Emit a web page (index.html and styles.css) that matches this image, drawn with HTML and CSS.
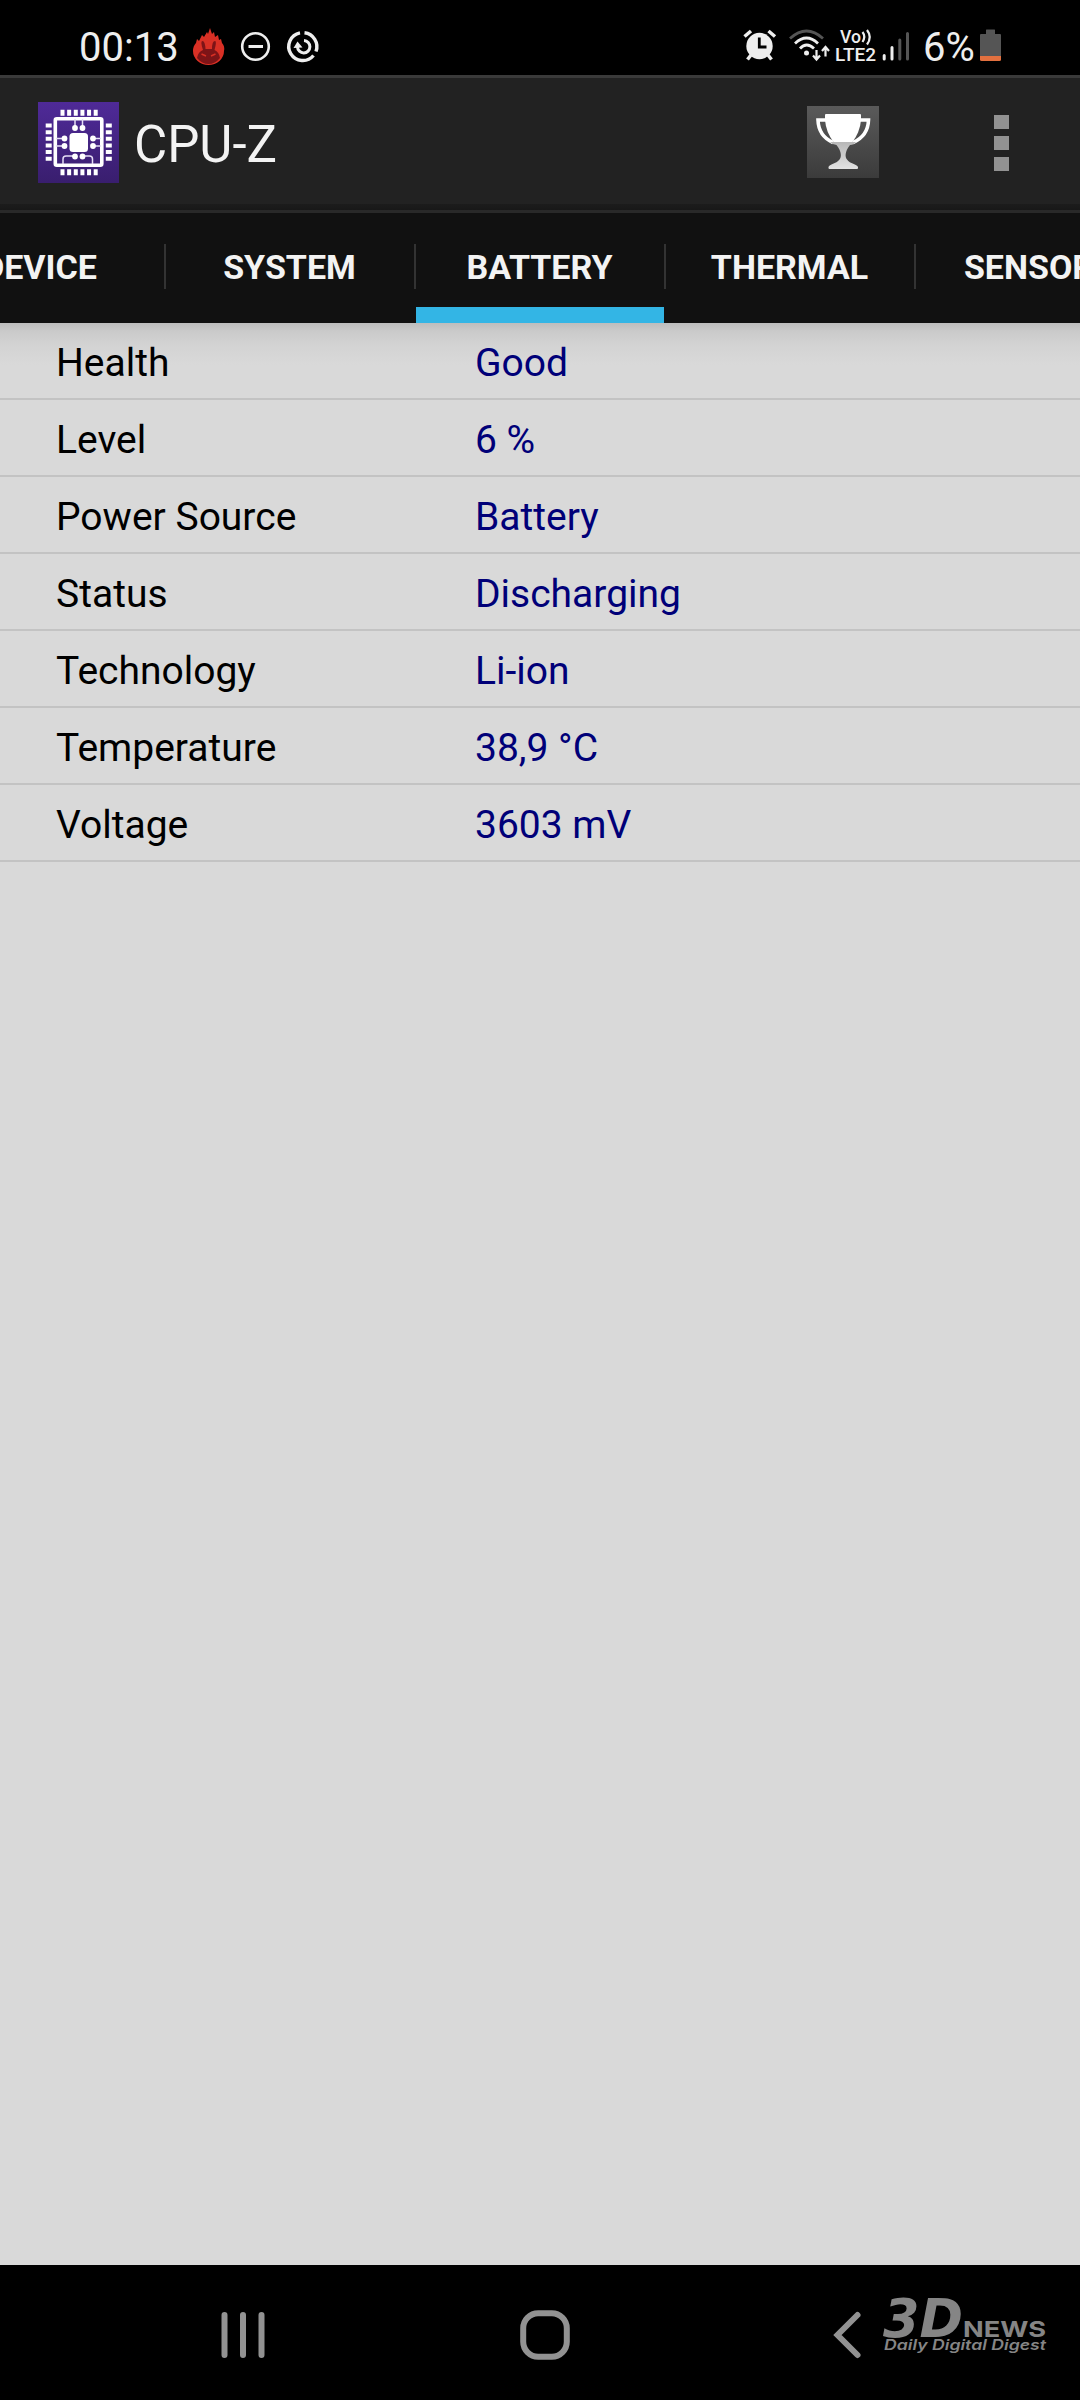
FILE: index.html
```
<!DOCTYPE html>
<html lang="en">
<head>
    <meta charset="UTF-8">
    <meta name="viewport" content="width=device-width, initial-scale=1.0">
    <title>CPU-Z</title>
    <link rel="stylesheet" href="styles.css">
</head>
<body>
    <div class="screen">
        <div class="status-bar">
            <div class="status-left">
                <span class="clock">00:13</span>
                <svg class="icon-antutu" width="32" height="36" viewBox="0 0 32 36">
                    <path fill="#d93025" d="M4 11 L6 13 L9 7 L11 9 L14 4 L15 6 L17 0 L19 6 L21 4 L22 9 L25 7 L26 12 L28 11 L29 15 Q32 18 31 23 A15.500 14 0 0 1 0 23 Q0 18 3 15 Z"/>
                    <path fill="#7d1417" d="M10 22 Q7 13 9.500 13 Q12 13 12.500 21 H19 Q19 13 22 13 Q24 13 21.500 22 Q26 24 27 30 Q22 36 15.500 36 Q9 36 4 30 Q5 24 10 22 Z"/>
                    <path stroke="#d93025" stroke-width="1.500" d="M8.500 26 L13 28 M22.500 26 L18 28"/>
                </svg>
                <svg class="icon-dnd" width="30" height="36" viewBox="0 0 30 36">
                    <circle cx="14.500" cy="18.500" r="13.300" fill="none" stroke="#eee" stroke-width="2.600"/>
                    <path stroke="#eee" stroke-width="3" d="M7.500 18.500 H22"/>
                </svg>
                <svg class="icon-sync" width="32" height="36" viewBox="0 0 32 36">
                    <g fill="none" stroke="#eee">
                        <path stroke-width="3.400" d="M13 4.800 A14 14 0 1 0 26.500 27.500"/>
                        <path stroke-width="3.400" d="M17.500 4.800 A14 14 0 0 1 29 23.500"/>
                        <path stroke-width="3" d="M17 12.500 A6.200 6.200 0 1 1 10.500 19"/>
                    </g>
                    <path fill="#eee" d="M6.500 20 L10.500 13.500 L15.500 19.500 Z"/>
                </svg>
            </div>
            <div class="status-right">
                <svg class="icon-alarm" width="34" height="36" viewBox="0 0 34 36">
                    <circle cx="16.500" cy="18" r="13.200" fill="#eee"/>
                    <path stroke="#eee" stroke-width="3.500" d="M1.500 8.500 L8 3 M25.500 3 L32 8.500 M4.500 31.500 L8 27 M28.500 31.500 L25 27"/>
                    <path fill="none" stroke="#000" stroke-width="2.800" d="M16.300 9.500 V19 H23.500"/>
                </svg>
                <svg class="icon-wifi" width="42" height="36" viewBox="0 0 42 36">
                    <g fill="none" stroke-width="2.800">
                        <path stroke="#555" d="M1 10.500 Q17.500 -4.500 34 10.500"/>
                        <path stroke="#eee" d="M6 15.500 Q17.500 4.500 29 15.500"/>
                        <path stroke="#eee" d="M11 20.500 Q17.500 13.500 25 20.500"/>
                    </g>
                    <circle cx="17.500" cy="25" r="2.500" fill="#eee"/>
                    <path fill="none" stroke="#eee" stroke-width="2.200" d="M27.500 22 V31 M24 27.500 L27.500 31.500 L31 27.500 M36.500 28.500 V20 M33 23 L36.500 19 L40 23"/>
                </svg>
                <svg class="icon-lte" width="41" height="36" viewBox="0 0 41 36">
                    <text class="lte-text" x="5" y="14.500" textLength="21" lengthAdjust="spacingAndGlyphs">Vo</text>
                    <path fill="none" stroke="#eee" stroke-width="2.200" d="M27.500 4 Q31 8.500 27.500 14 M32 2 Q37.500 9 32 16.500"/>
                    <text class="lte-text" x="0" y="32.500" textLength="41" lengthAdjust="spacingAndGlyphs">LTE2</text>
                </svg>
                <svg class="icon-signal" width="28" height="36" viewBox="0 0 28 36">
                    <g stroke-width="3" stroke-linecap="round">
                        <path stroke="#eee" d="M2.200 27.500 V31 M10 19.500 V31"/>
                        <path stroke="#555" d="M17.800 12 V31 M25.500 5.500 V31"/>
                    </g>
                </svg>
                <span class="percent">6%</span>
                <svg class="icon-battery" width="21" height="36" viewBox="0 0 21 36">
                    <path fill="#555" d="M6 2 Q6 1.500 6.500 1.500 H14.500 Q15 1.500 15 2 V6 H20 Q21 6 21 7 V28 H0 V7 Q0 6 1 6 H6 Z"/>
                    <path fill="#e2703f" d="M0 28 H21 V31.500 Q21 33 19.500 33 H1.500 Q0 33 0 31.500 Z"/>
                </svg>
            </div>
        </div>

        <header class="action-bar">
            <svg class="app-icon" width="81" height="81" viewBox="0 0 81 81">
                <defs>
                    <linearGradient id="purple" x1="0" y1="0" x2="0" y2="1">
                        <stop offset="0" stop-color="#4f2a98"/>
                        <stop offset="1" stop-color="#391e6e"/>
                    </linearGradient>
                </defs>
                <rect width="81" height="81" fill="url(#purple)"/>
                <!-- pins of the chip -->
                <g stroke="#fff" stroke-width="6" fill="none" stroke-dasharray="4 2.640">
                    <path d="M22.500 10.700 H60 M22.500 70.300 H60 M10.700 21.500 V58.900 M70.800 21.500 V58.900"/>
                </g>
                <rect x="17.300" y="16.800" width="46.500" height="46.500" rx="1.500" fill="none" stroke="#fff" stroke-width="3.600"/>
                <rect x="31.500" y="31" width="18.500" height="19" rx="3.500" fill="#fff"/>
                <g fill="none" stroke="#e5ddf5" stroke-width="1.500">
                    <path d="M37 17 V26 M44.500 17 V26 M18 36.500 H26 M18 44 H26 M56 36.500 H63 M56 44 H63"/>
                    <path d="M37 54 H28 Q25 54 25 57 V62 M44.500 54 H51.500 Q54.500 54 54.500 57 V62"/>
                </g>
                <g fill="#fff">
                    <circle cx="37" cy="26" r="2.900"/><circle cx="44.500" cy="26" r="2.900"/>
                    <circle cx="37" cy="54.500" r="2.900"/><circle cx="44.500" cy="54.500" r="2.900"/>
                    <circle cx="26.500" cy="36.500" r="2.900"/><circle cx="26.500" cy="44" r="2.900"/>
                    <circle cx="55" cy="36.500" r="2.900"/><circle cx="55" cy="44" r="2.900"/>
                </g>
            </svg>
            <h1 class="title">CPU-Z</h1>
            <svg class="trophy" width="72" height="72" viewBox="0 0 72 72">
                <defs>
                    <linearGradient id="tile" x1="0" y1="0" x2="0" y2="1">
                        <stop offset="0" stop-color="#5a5a5a"/>
                        <stop offset="1" stop-color="#3b3b3b"/>
                    </linearGradient>
                    <linearGradient id="stem" x1="0" y1="0" x2="0" y2="1">
                        <stop offset="0" stop-color="#b8b8b8"/>
                        <stop offset="1" stop-color="#e2e2e2"/>
                    </linearGradient>
                </defs>
                <rect width="72" height="72" fill="url(#tile)"/>
                <path fill="none" stroke="#fff" stroke-width="3.600" d="M20 14 H11 Q11.500 30 26 36.500 M52 14 H61.500 Q61 30 46 36.500"/>
                <path fill="#fff" d="M18 9 Q18 8 19 8 H53 Q54 8 54 9 V14 Q53 26 45.500 36 H26.500 Q19 26 18 14 Z"/>
                <path fill="url(#stem)" d="M23 36 H49 Q47 39 43 39 C37.500 46 38 51 40 53.500 C43 58 50 58 51 61 V62 Q51 63 50 63 H22.500 Q21.500 63 21.500 62 V61 C22.500 58 29 58 32.500 53.500 C34.500 51 35 46 29.500 39 Q26 39 23 36 Z"/>
            </svg>
            <div class="menu">
                <span></span>
                <span></span>
                <span></span>
            </div>
        </header>

        <nav class="tabs">
            <div class="tab">DEVICE</div>
            <div class="tab">SYSTEM</div>
            <div class="tab active">BATTERY</div>
            <div class="tab">THERMAL</div>
            <div class="tab">SENSORS</div>
        </nav>

        <main class="content">
            <div class="row"><span class="label">Health</span><span class="value">Good</span></div>
            <div class="row"><span class="label">Level</span><span class="value">6 %</span></div>
            <div class="row"><span class="label">Power Source</span><span class="value">Battery</span></div>
            <div class="row"><span class="label">Status</span><span class="value">Discharging</span></div>
            <div class="row"><span class="label">Technology</span><span class="value">Li-ion</span></div>
            <div class="row"><span class="label">Temperature</span><span class="value">38,9 °C</span></div>
            <div class="row"><span class="label">Voltage</span><span class="value">3603 mV</span></div>
        </main>

        <footer class="nav-bar">
            <svg class="nav-recent" width="46" height="50" viewBox="0 0 46 50">
                <path stroke="#929292" stroke-width="6" stroke-linecap="round" d="M4.500 5 V45 M23 5 V45 M41.500 5 V45"/>
            </svg>
            <svg class="nav-home" width="50" height="50" viewBox="0 0 50 50">
                <rect x="3.200" y="3.200" width="43.600" height="43.600" rx="15" fill="none" stroke="#929292" stroke-width="6"/>
            </svg>
            <svg class="nav-back" width="28" height="50" viewBox="0 0 28 50">
                <path fill="none" stroke="#929292" stroke-width="6" stroke-linecap="round" d="M24.500 5 L4.500 25 L24.500 45"/>
            </svg>
            <svg class="watermark" width="166" height="60" viewBox="0 0 166 60">
                <text class="wm-big" x="0" y="42" textLength="80" lengthAdjust="spacingAndGlyphs">3D</text>
                <text class="wm-news" x="80" y="42" textLength="83" lengthAdjust="spacingAndGlyphs">NEWS</text>
                <text class="wm-tag" x="1" y="55" textLength="162" lengthAdjust="spacingAndGlyphs">Daily Digital Digest</text>
            </svg>
        </footer>
    </div>
</body>
</html>
```
FILE: styles.css
```
* {
    margin: 0;
    padding: 0;
    box-sizing: border-box;
}

body {
    background-color: #000;
    font-family: Roboto, sans-serif;
}

svg {
    display: block;
    flex-shrink: 0;
    overflow: visible;
}

.screen {
    width: 1080px;
    height: 2400px;
    display: flex;
    flex-direction: column;
    overflow: hidden;
}

/* status bar */
.status-bar {
    height: 75px;
    padding: 28px 79px 0 79px;
    display: flex;
    justify-content: space-between;
    background-color: #000;
    color: #eee;
}

.status-left,
.status-right {
    display: flex;
    height: 36px;
}

.clock,
.percent {
    font-size: 40px;
    line-height: 40px;
}

.clock {
    width: 114px;
}

.icon-dnd {
    margin-left: 16px;
}

.icon-sync {
    margin-left: 16px;
}

.icon-wifi {
    margin-left: 12px;
}

.icon-lte {
    margin-left: 4px;
}

.icon-signal {
    margin-left: 6px;
}

.percent {
    width: 57px;
    margin-left: 13px;
    white-space: nowrap;
}

.lte-text {
    font-size: 18px;
    font-weight: 500;
    fill: #eee;
}

/* action bar */
.action-bar {
    height: 138px;
    padding: 0 71px 0 38px;
    display: flex;
    align-items: center;
    border-top: 3px solid #3a3a3a;
    border-bottom: 3px solid #292929;
    background: linear-gradient(#222 126px, #1c1c1c 126px, #181818);
}

.app-icon {
    margin-bottom: 3px;
}

.title {
    flex: 1;
    margin-left: 15px;
    font-size: 51px;
    font-weight: 400;
    color: #f3f3f3;
}

.trophy {
    margin-bottom: 4px;
}

.menu {
    margin: 0 0 2px 115px;
    display: flex;
    flex-direction: column;
    gap: 6.5px;
}

.menu span {
    width: 15px;
    height: 14.5px;
    background-color: #929292;
}

/* tabs */
.tabs {
    height: 110px;
    display: flex;
    margin-left: -84px;
    background-color: #111;
}

.tab {
    width: 250px;
    flex-shrink: 0;
    padding-right: 3px;
    text-align: center;
    font-size: 34px;
    font-weight: 700;
    line-height: 108px;
    color: #f3f3f3;
    background: linear-gradient(#333, #333) right 31px / 2px 45px no-repeat;
}

.tab:last-child {
    background: none;
}

.tab.active {
    background: linear-gradient(#333, #333) right 31px / 2px 45px no-repeat,
        linear-gradient(#33b5e5, #33b5e5) 0 94px / 248px 16px no-repeat;
}

/* info list */
.content {
    flex: 1;
    background: linear-gradient(#bdbdbd, #cacaca 8px, #d3d3d3 22px, #d9d9d9 42px);
}

.row {
    height: 77px;
    padding-left: 56px;
    display: flex;
    border-bottom: 2px solid #c3c3c3;
    font-size: 39px;
    line-height: 80px;
}

.label {
    width: 419px;
    color: #000;
}

.value {
    color: #000078;
}

/* navigation bar */
.nav-bar {
    height: 135px;
    padding: 45px 0 0 220px;
    display: flex;
    background-color: #000;
}

.nav-home {
    margin-left: 254px;
}

.nav-back {
    margin-left: 263px;
}

.watermark {
    margin: -15px 0 0 22px;
    fill: #858585;
    font-family: "DejaVu Sans", sans-serif;
}

.wm-big {
    font-size: 53px;
    font-weight: 700;
    font-style: italic;
}

.wm-news {
    font-family: Inter, sans-serif;
    font-size: 22px;
    font-weight: 700;
}

.wm-tag {
    font-family: Inter, sans-serif;
    font-size: 14.5px;
    font-weight: 600;
    font-style: italic;
}
```
